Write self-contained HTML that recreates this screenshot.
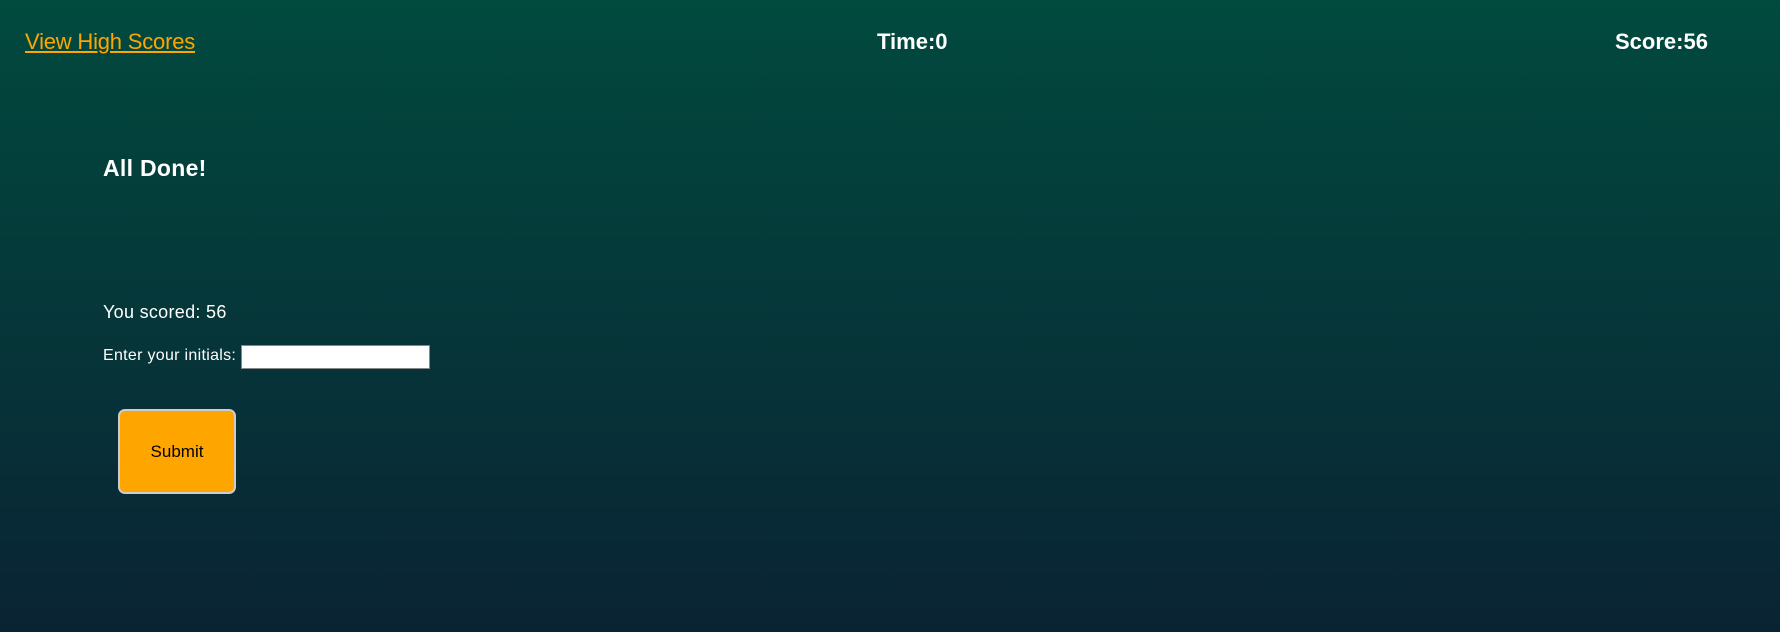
<!DOCTYPE html>
<html><head><meta charset="utf-8"><style>
html,body{margin:0;padding:0;}
body{width:1780px;height:632px;overflow:hidden;position:relative;background:linear-gradient(#014a3e,#0a2334);font-family:"Liberation Sans",sans-serif;color:#fff;}
.a{position:absolute;white-space:nowrap;}
a{color:#ffa500;text-decoration:underline;}
</style></head><body>
<div class="a" style="left:25px;top:29px;font-size:22px;letter-spacing:-0.2px;"><a>View High Scores</a></div>
<div class="a" style="left:877px;top:29px;font-size:22px;font-weight:bold;">Time:0</div>
<div class="a" style="left:1615px;top:29px;font-size:22px;font-weight:bold;">Score:56</div>
<div class="a" style="left:103px;top:155px;font-size:23px;font-weight:bold;letter-spacing:0.3px;">All Done!</div>
<div class="a" style="left:103px;top:302px;font-size:18px;letter-spacing:0.3px;">You scored: 56</div>
<div class="a" style="left:103px;top:347px;font-size:16px;letter-spacing:0.3px;">Enter your initials:</div>
<div class="a" style="left:241px;top:345px;width:187px;height:22px;background:#fff;border:1px solid #888;"></div>
<div class="a" style="left:118px;top:409px;width:114px;height:81px;background:#ffa500;border:2px solid #ccc;border-radius:7px;color:#000;font-size:17px;text-align:center;line-height:81px;">Submit</div>
</body></html>
